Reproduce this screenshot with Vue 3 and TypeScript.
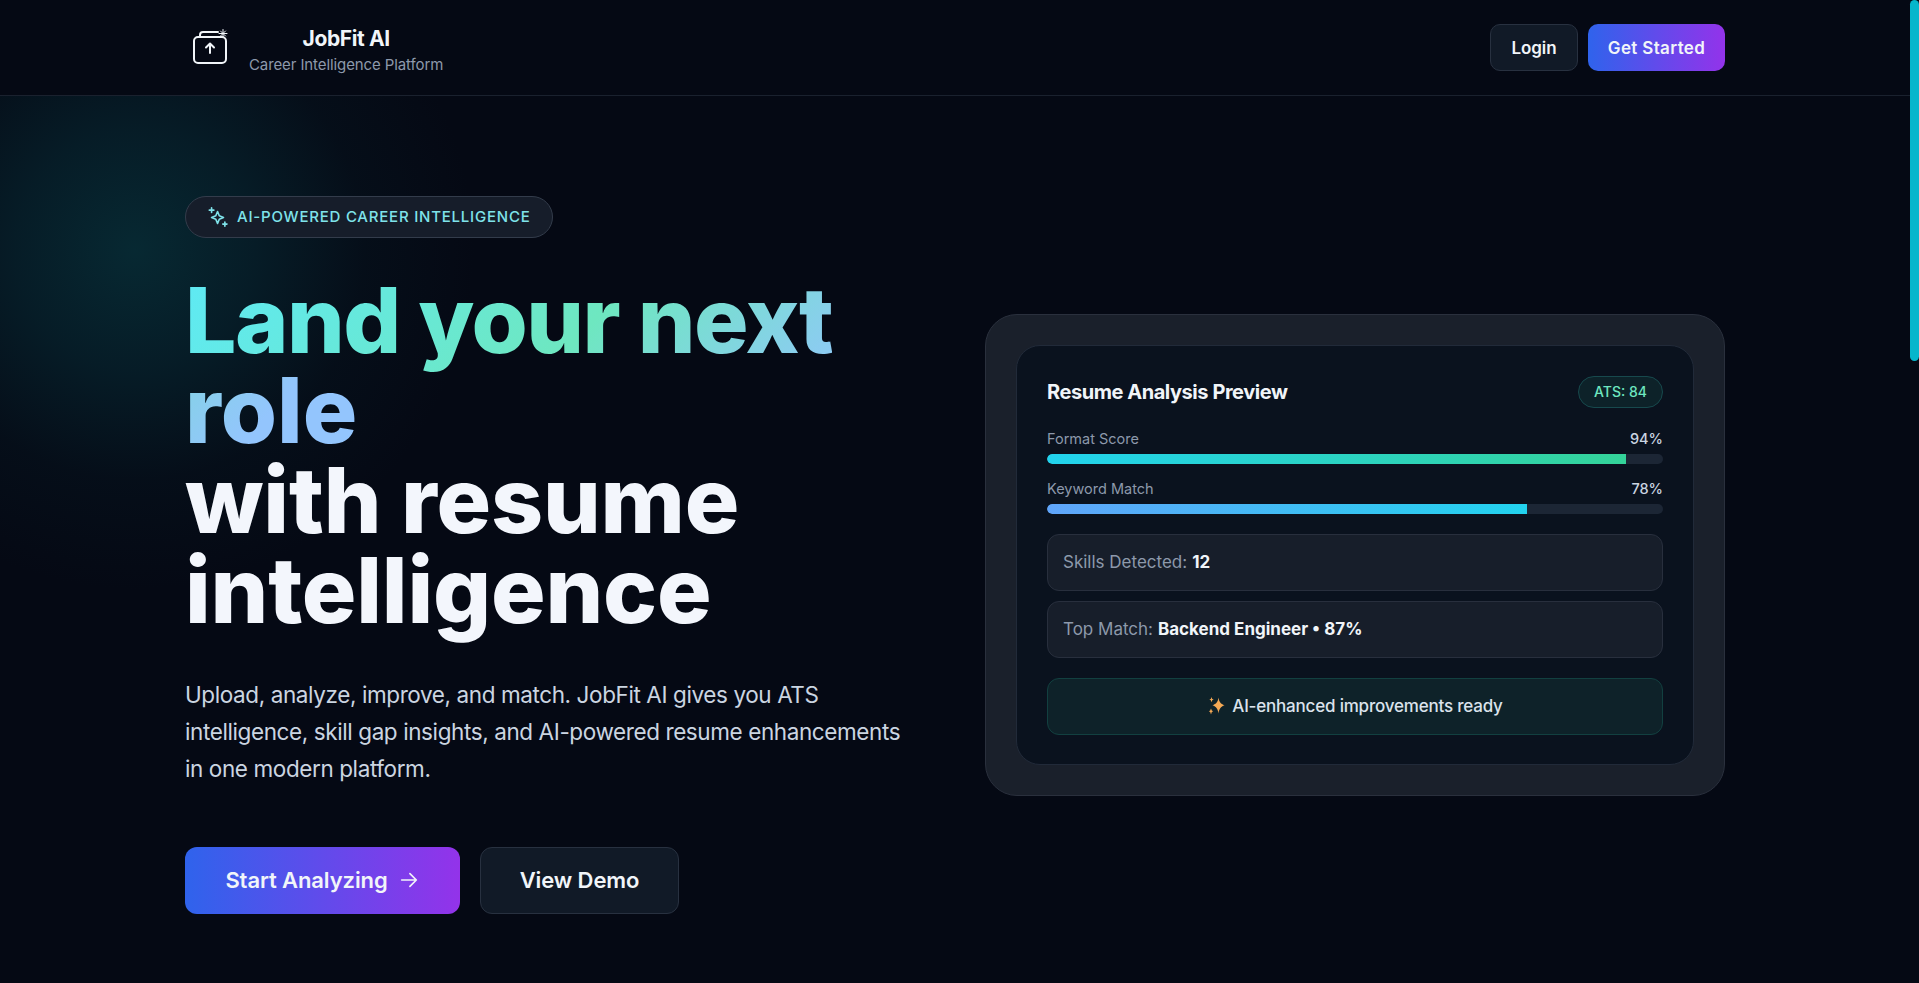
<script setup lang="ts">
const bars = [
  { label: 'Format Score', value: 94, cls: 'fill-green' },
  { label: 'Keyword Match', value: 78, cls: 'fill-blue' },
]
</script>

<template>
  <div class="page">
    <header class="topbar">
      <div class="wrap topbar-inner">
        <div class="brand">
          <svg class="logo" width="40" height="40" viewBox="0 0 40 40" fill="none" stroke="#f1f5f9" stroke-width="2" stroke-linecap="round" stroke-linejoin="round">
            <rect x="5" y="9" width="32" height="26" rx="4" />
            <path d="M11 9V7a3 3 0 0 1 3-3h15" />
            <path d="M21 25V15.500M17 19.500l4-4 4 4" />
            <path d="M34 1.500v8M30 5.500h8M31.500 3l5 5M36.500 3l-5 5" stroke-width="1" />
          </svg>
          <div class="brand-text">
            <div class="brand-name">JobFit AI</div>
            <div class="brand-sub">Career Intelligence Platform</div>
          </div>
        </div>
        <nav class="actions">
          <button class="btn ghost small">Login</button>
          <button class="btn primary small">Get Started</button>
        </nav>
      </div>
    </header>

    <main class="wrap hero">
      <section class="left">
        <div class="badge">
          <svg width="22" height="22" viewBox="0 0 24 24" fill="none" stroke="#7fe3ea" stroke-width="1.800" stroke-linecap="round" stroke-linejoin="round">
            <path d="M11.500 6l1.900 4.600 4.600 1.900-4.600 1.900-1.900 4.600-1.900-4.600L5 12.500l4.600-1.900z" />
            <path d="M5 2v5M2.500 4.500h5M19.500 17.500v4.500M17.200 19.700h4.600" />
          </svg>
          <span>AI-POWERED CAREER INTELLIGENCE</span>
        </div>
        <h1 class="title"><span class="grad">Land your next <span class="role">role</span></span><br /><span class="plain">with resume intelligence</span></h1>
        <p class="lead">Upload, analyze, improve, and match. JobFit AI gives you ATS intelligence, skill gap insights, and AI-powered resume enhancements in one modern platform.</p>
        <div class="cta">
          <button class="btn primary large">
            Start Analyzing
            <svg width="22" height="22" viewBox="0 0 24 24" fill="none" stroke="#f1f5f9" stroke-width="1.800" stroke-linecap="round" stroke-linejoin="round"><path d="M4 12h16M13 5l7 7-7 7" /></svg>
          </button>
          <button class="btn ghost large">View Demo</button>
        </div>
      </section>

      <aside class="outer">
        <div class="inner">
          <div class="card-head">
            <h2>Resume Analysis Preview</h2>
            <span class="ats">ATS: 84</span>
          </div>
          <div class="bars">
            <div v-for="b in bars" :key="b.label" class="bar-row">
              <div class="bar-label"><span>{{ b.label }}</span><b>{{ b.value }}%</b></div>
              <div class="track"><div class="fill" :class="b.cls" :style="{ width: b.value + '%' }"></div></div>
            </div>
          </div>
          <div class="stat">Skills Detected: <b>12</b></div>
          <div class="stat">Top Match: <b>Backend Engineer • 87%</b></div>
          <div class="ready">
            <svg width="20" height="20" viewBox="0 0 20 20" fill="#f4a955">
              <path d="M11.500 1.500c.6 4.400 2.200 6.400 6 7.800-3.800 1.400-5.400 3.600-6 8.200-.6-4.600-2.200-6.800-6-8.200 3.800-1.400 5.400-3.400 6-7.800z" />
              <path d="M4.500 1l.7 2 1.500.6-1.500.6-.7 2-.7-2-1.500-.6 1.500-.6zM4 12.500l.8 2 1.400.7-1.400.7-.8 2.600-.8-2.600-1.400-.7 1.400-.7z" />
            </svg>
            <span>AI-enhanced improvements ready</span>
          </div>
        </div>
      </aside>
    </main>

    <div class="thumb"></div>
  </div>
</template>

<style>
html, body { margin: 0; background: #050914; overflow: hidden; }
</style>

<style scoped>
.page {
  position: relative;
  height: 983px;
  overflow: hidden;
  font-family: Inter, "Liberation Sans", sans-serif;
  color: #f1f5f9;
  background:
    radial-gradient(circle at 135px 250px, rgba(9, 72, 80, 0.5) 0, rgba(8, 62, 72, 0.36) 120px, rgba(7, 40, 50, 0.16) 230px, rgba(6, 20, 30, 0) 340px),
    #050914;
}
.wrap { width: 1540px; margin-left: 185px; }
.topbar { height: 95px; border-bottom: 1px solid #1a212e; background: #050914; }
.topbar-inner { height: 95px; display: flex; align-items: center; justify-content: space-between; }
.brand { display: flex; align-items: center; gap: 12px; }
.logo { margin-left: 4px; }
.brand-text { display: flex; flex-direction: column; align-items: center; gap: 2px; margin-left: 8px; padding-top: 9px; }
.brand-name { font-size: 21px; font-weight: 700; letter-spacing: -0.4px; line-height: 24px; }
.brand-sub { font-size: 15px; color: #8d99ab; line-height: 24px; letter-spacing: -0.1px; }
.actions { display: flex; gap: 10px; }
.btn { font-family: inherit; color: #f1f5f9; cursor: pointer; display: inline-flex; align-items: center; justify-content: center; box-sizing: border-box; }
.ghost { background: #111a27; border: 1px solid #283140; }
.primary { border: 0; background: linear-gradient(90deg, #2f63ec, #9333ea); }
.small { height: 47px; border-radius: 10px; font-size: 17px; font-weight: 600; letter-spacing: -0.1px; }
.ghost.small { width: 88px; }
.primary.small { width: 137px; letter-spacing: 0.35px; }
.hero { display: grid; grid-template-columns: 1fr 1fr; column-gap: 60px; align-items: center; height: 917px; box-sizing: border-box; }
.badge { display: inline-flex; align-items: center; gap: 8px; height: 42px; box-sizing: border-box; padding: 0 21px; border-radius: 21px; border: 1px solid #333c4b; background: #161d2a; color: #7fe3ea; font-size: 15px; font-weight: 500; letter-spacing: 0.78px; }
.title { margin: 37px 0 0; font-size: 91px; line-height: 90px; font-weight: 850; width: 700px; color: #f3f6fc; }
.plain { letter-spacing: -0.2px; }
.grad { letter-spacing: -1.5px; background: linear-gradient(135deg, #5eeaf6 0%, #6ee7c0 50%, #93c5fd 85%); -webkit-background-clip: text; background-clip: text; color: transparent; }
.role { letter-spacing: 0; }
.lead { margin: 41px 0 0; width: 730px; font-size: 22.500px; line-height: 37px; color: #cbd5e1; letter-spacing: -0.4px; }
.cta { display: flex; gap: 20px; margin-top: 60px; }
.large { height: 67px; border-radius: 12px; font-size: 22px; font-weight: 600; letter-spacing: -0.1px; }
.primary.large { width: 275px; gap: 10px; }
.ghost.large { width: 199px; }
.outer { box-sizing: border-box; height: 482px; padding: 30px; border-radius: 32px; background: #1a202b; border: 1px solid #2a303d; }
.inner { box-sizing: border-box; height: 100%; padding: 30px; border-radius: 24px; background: #0a121e; border: 1px solid #212a39; }
.card-head { display: flex; justify-content: space-between; align-items: center; }
.card-head h2 { margin: 0; font-size: 20px; font-weight: 700; letter-spacing: -0.45px; color: #f1f5f9; }
.ats { box-sizing: border-box; height: 32px; width: 85px; display: flex; align-items: center; justify-content: center; border-radius: 16px; border: 1px solid #17494d; background: #0d2229; color: #6ee7c0; font-size: 14px; font-weight: 500; }
.bars { margin-top: 21px; display: flex; flex-direction: column; gap: 15px; }
.bar-label { display: flex; justify-content: space-between; font-size: 14.500px; line-height: 20px; color: #8d99ab; margin-bottom: 5px; }
.bar-label b { font-weight: 500; color: #cbd5e1; }
.track { height: 10px; background: #1c2635; border-radius: 5px; overflow: hidden; }
.fill { height: 100%; border-radius: 5px 0 0 5px; }
.fill-green { background: linear-gradient(90deg, #22d3ee, #34d399); }
.fill-blue { background: linear-gradient(90deg, #60a5fa, #22d3ee); }
.stat { box-sizing: border-box; height: 57px; margin-top: 10px; padding: 0 15px; display: flex; align-items: center; gap: 5px; background: #171e2a; border: 1px solid #282f3d; border-radius: 12px; color: #8d99ab; font-size: 17px; }
.bars + .stat { margin-top: 20px; }
.stat b { color: #f1f5f9; font-weight: 700; }
.ready { box-sizing: border-box; height: 57px; margin-top: 20px; display: flex; align-items: center; justify-content: center; gap: 5px; background: #0e2229; border: 1px solid #124040; border-radius: 12px; color: #dbe3ec; font-size: 17px; font-weight: 500; letter-spacing: -0.2px; }
.thumb { position: absolute; top: 0; right: 0; width: 9px; height: 361px; border-radius: 5px; background: #06b6cc; }
</style>
